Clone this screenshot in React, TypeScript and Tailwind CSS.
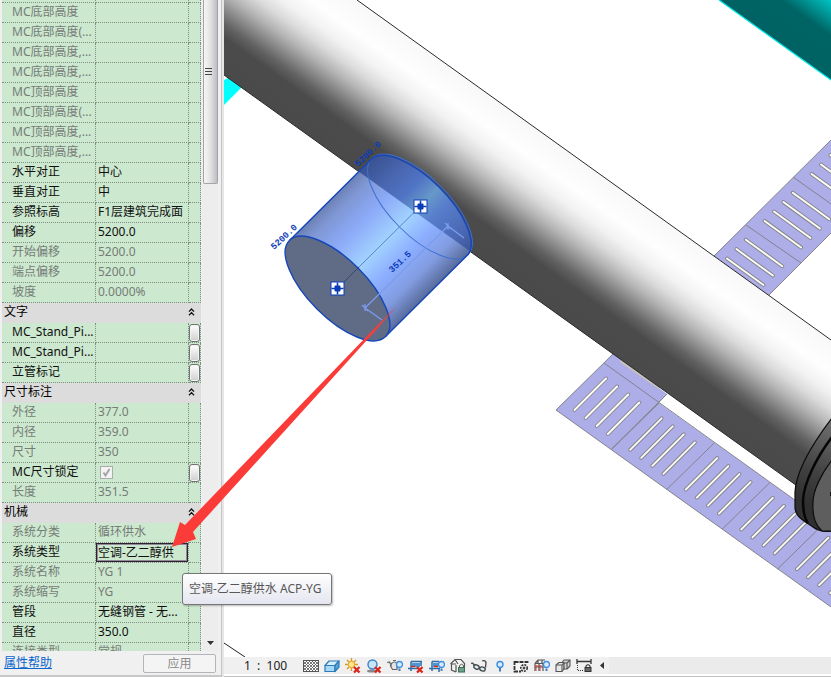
import React from "react";

type Row = {
  name: string;
  value?: string;
  active?: boolean;
  more?: boolean;
  kind?: "header" | "check" | "select";
};

const rows: Row[] = [
  { name: "MC底部高度" },
  { name: "MC底部高度(..." },
  { name: "MC底部高度,..." },
  { name: "MC底部高度,..." },
  { name: "MC顶部高度" },
  { name: "MC顶部高度(..." },
  { name: "MC顶部高度,..." },
  { name: "MC顶部高度,..." },
  { name: "水平对正", value: "中心", active: true },
  { name: "垂直对正", value: "中", active: true },
  { name: "参照标高", value: "F1层建筑完成面", active: true },
  { name: "偏移", value: "5200.0", active: true },
  { name: "开始偏移", value: "5200.0" },
  { name: "端点偏移", value: "5200.0" },
  { name: "坡度", value: "0.0000%" },
  { name: "文字", kind: "header" },
  { name: "MC_Stand_Pi...", active: true, more: true },
  { name: "MC_Stand_Pi...", active: true, more: true },
  { name: "立管标记", active: true, more: true },
  { name: "尺寸标注", kind: "header" },
  { name: "外径", value: "377.0" },
  { name: "内径", value: "359.0" },
  { name: "尺寸", value: "350" },
  { name: "MC尺寸锁定", active: true, more: true, kind: "check" },
  { name: "长度", value: "351.5" },
  { name: "机械", kind: "header" },
  { name: "系统分类", value: "循环供水" },
  { name: "系统类型", value: "空调-乙二醇供", active: true, kind: "select" },
  { name: "系统名称", value: "YG 1" },
  { name: "系统缩写", value: "YG" },
  { name: "管段", value: "无缝钢管 - 无...", active: true },
  { name: "直径", value: "350.0", active: true },
  { name: "连接类型", value: "常规" },
];

const cell = "h-5 border-b border-dotted border-[#7f8f82] p-0 text-left font-normal";

function HeaderRow({ name }: { name: string }) {
  return (
    <tr>
      <th colSpan={3} className="h-5 bg-[#dcdcdc] p-0 font-normal">
        <button className="flex h-5 w-full items-center justify-between pr-[6px] pb-[2px] pl-[2px] text-black">
          <span>{name}</span>
          <svg width="7" height="8" viewBox="0 0 7 8" fill="none" stroke="#111" strokeWidth="1.3" aria-hidden="true">
            <path d="M1 3.6 3.5 1 6 3.6M1 7.2 3.5 4.6 6 7.2" />
          </svg>
        </button>
      </th>
    </tr>
  );
}

function PropertyRow({ row }: { row: Row }) {
  const tone = row.active ? "text-[#101010]" : "text-[#767c77]";
  return (
    <tr className={tone}>
      <th scope="row" className={`${cell} border-r pl-[10px] whitespace-nowrap`}>
        <div className="h-[19px] leading-[17px]">{row.name}</div>
      </th>
      <td className={`${cell} border-r whitespace-nowrap`}>
        {row.kind === "select" ? (
          <input
            aria-label={row.name}
            defaultValue={row.value}
            className="block h-[19px] w-full border border-[#2f2032] bg-[#cce8cf] pb-[2px] pl-px shadow-[inset_0_0_0_1px_#8f8a95] outline-none"
          />
        ) : row.kind === "check" ? (
          <div className="relative ml-1 h-[13px] w-[13px]">
            <input
              type="checkbox"
              aria-label={row.name}
              defaultChecked
              disabled
              className="block h-[13px] w-[13px] appearance-none border border-[#a9adab] bg-[#f3f3f3]"
            />
            <svg className="pointer-events-none absolute inset-0" width="13" height="13" viewBox="0 0 13 13" fill="none" stroke="#a2a2a6" strokeWidth="1.8" aria-hidden="true">
              <path d="M3.5 6.5 5.5 9.5 9.5 3" />
            </svg>
          </div>
        ) : (
          <div className="h-[19px] pl-[2px] leading-[17px]">{row.value}</div>
        )}
      </td>
      <td className={`${cell} border-r`}>
        {row.more && (
          <button
            aria-label={`${row.name} …`}
            className="block h-[18px] w-[11px] rounded-[3px] border border-[#6f7471] bg-linear-to-b from-white to-[#cfcfcf] shadow-[inset_0_0_0_1px_#f4f4f4]"
          />
        )}
      </td>
    </tr>
  );
}

function Properties() {
  return (
    <aside className="flex w-[221px] shrink-0 flex-col bg-[#f0f0f0]">
      <div className="flex min-h-0 flex-1 overflow-hidden pl-[2px]">
        <div className="w-[199px] shrink-0 overflow-hidden">
          <table className="w-full table-fixed border-separate border-spacing-0 bg-[#cce8cf]">
            <colgroup>
              <col className="w-[94px]" />
              <col className="w-[93px]" />
              <col className="w-[12px]" />
            </colgroup>
            <tbody>
              <tr>
                <td className="h-[3px] border-r border-b border-dotted border-[#7f8f82] p-0" />
                <td className="h-[3px] border-r border-b border-dotted border-[#7f8f82] p-0" />
                <td className="h-[3px] border-r border-b border-dotted border-[#7f8f82] p-0" />
              </tr>
              {rows.map((row, i) =>
                row.kind === "header" ? <HeaderRow key={i} name={row.name} /> : <PropertyRow key={i} row={row} />,
              )}
            </tbody>
          </table>
        </div>
        <div className="ml-[1px] flex w-4 flex-col items-center justify-between bg-[#ededed]">
          <div className="flex h-[184px] w-[15px] flex-col items-center rounded-b-[2px] border border-t-0 border-[#a3a3a8] bg-linear-to-r from-[#f6f6f6] via-[#e2e2e4] to-[#bcbcc2] pt-[68px] pr-[3px]">
            <div className="flex w-[7px] flex-col gap-[2px]">
              <span className="h-px bg-[#444]" />
              <span className="h-px bg-[#444]" />
              <span className="h-px bg-[#444]" />
            </div>
          </div>
          <button aria-label="向下滚动" className="flex h-[17px] w-[15px] items-center justify-center">
            <svg width="7" height="4" viewBox="0 0 7 4" aria-hidden="true">
              <path d="M0 0h7L3.500 4z" fill="#333" />
            </svg>
          </button>
        </div>
      </div>
      <footer className="flex h-6 shrink-0 items-center justify-between pr-[5px] pl-1">
        <a href="#help" className="text-[#0a66cc] underline">
          属性帮助
        </a>
        <button disabled className="h-[19px] w-[73px] rounded-[2px] border border-[#b2b6ba] bg-[#f4f4f4] leading-[17px] text-[#8a8a8a]">
          应用
        </button>
      </footer>
      <div className="h-[2px] shrink-0 bg-[#c8c8c8]" />
    </aside>
  );
}

const lowerCells = [0, 1, 2, 3, 4];
const fourSlots = [0, 1, 2, 3];
const upperSlots = [0, 1, 2, 4, 5, 6, 7, 9, 10, 11];

function Slot({ x, y, dx, dy }: { x: number; y: number; dx: number; dy: number }) {
  return (
    <g strokeLinecap="round">
      <path d={`M${x} ${y}l${dx} ${dy}`} stroke="#85858f" strokeWidth="3.8" />
      <path d={`M${x} ${y}l${dx} ${dy}`} stroke="#fdfdf6" strokeWidth="1.9" />
    </g>
  );
}

function Handle({ x, y }: { x: number; y: number }) {
  return (
    <g transform={`translate(${x} ${y})`}>
      <rect x="-6.500" y="-6.500" width="13" height="13" fill="#fff" stroke="#0b3cb8" />
      <path d="M0-6V6M-6 0H6" stroke="#0b3cb8" strokeWidth="1.6" />
      <rect x="-3" y="-3" width="6" height="6" rx="1" fill="#0b3cb8" />
    </g>
  );
}

function Scene() {
  const label = "fill-[#0b3cb8] font-['Liberation_Mono',monospace] text-[9px] font-bold";
  return (
    <svg className="block h-full w-full" viewBox="224 0 607 657" preserveAspectRatio="xMinYMin slice" fill="none" role="img" aria-label="三维视图">
      <defs>
        <linearGradient id="pipe" gradientUnits="userSpaceOnUse" x1="224" y1="75" x2="304.700" y2="-37.800">
          <stop offset="0" stopColor="#4a4a4a" />
          <stop offset=".22" stopColor="#4b4b4b" />
          <stop offset=".3" stopColor="#626262" />
          <stop offset=".38" stopColor="#868686" />
          <stop offset=".48" stopColor="#b4b4b4" />
          <stop offset=".58" stopColor="#dadada" />
          <stop offset=".68" stopColor="#f2f2f2" />
          <stop offset=".8" stopColor="#fefefe" />
          <stop offset="1" stopColor="#f8f8f8" />
        </linearGradient>
        <linearGradient id="teal" gradientUnits="userSpaceOnUse" x1="775" y1="40" x2="813" y2="-13">
          <stop offset="0" stopColor="#006262" />
          <stop offset=".55" stopColor="#006464" />
          <stop offset="1" stopColor="#00c4c4" />
        </linearGradient>
        <linearGradient id="body" gradientUnits="userSpaceOnUse" x1="289.500" y1="240.500" x2="385.500" y2="336.500">
          <stop offset="0" stopColor="#6b80b4" />
          <stop offset=".1" stopColor="#7f97d4" />
          <stop offset=".28" stopColor="#8caaf8" />
          <stop offset=".5" stopColor="#a2d2ff" />
          <stop offset=".68" stopColor="#8caeff" />
          <stop offset=".85" stopColor="#829ce0" />
          <stop offset="1" stopColor="#586c9c" />
        </linearGradient>
        <linearGradient id="bodyDark" gradientUnits="userSpaceOnUse" x1="372" y1="158.500" x2="468" y2="254.500">
          <stop offset="0" stopColor="#3a5290" />
          <stop offset=".2" stopColor="#4966b0" />
          <stop offset=".36" stopColor="#5074c4" />
          <stop offset=".5" stopColor="#6698c8" />
          <stop offset=".62" stopColor="#587ecc" />
          <stop offset=".85" stopColor="#4a68b4" />
          <stop offset="1" stopColor="#3e5596" />
        </linearGradient>
        <linearGradient id="flange" gradientUnits="userSpaceOnUse" x1="831" y1="425" x2="800" y2="500">
          <stop offset="0" stopColor="#6c6c6c" />
          <stop offset=".6" stopColor="#414141" />
          <stop offset="1" stopColor="#303030" />
        </linearGradient>
        <clipPath id="abovePipeEdge">
          <path d="M224 75 831 510V0H224z" />
        </clipPath>
      </defs>

      <rect x="224" width="607" height="657" fill="#fff" />
      <path d="M719 0 831 80V0z" fill="url(#teal)" />
      <path d="M719 0 831 80" stroke="#00e8e8" strokeWidth="1.200" />
      <path d="M224 80 230 77 242 87 224 105z" fill="#00ffff" />

      <path d="M714 256 831 140V233L768 296z" fill="#adade8" />
      <path d="M714 256 831 140M768 296 831 233M746 225 801 263M793 177 831 204" stroke="#83838d" />
      {upperSlots.map((n) => (
        <Slot key={n} x={727 + n * 9.4} y={258.5 - n * 9.4} dx={36.5} dy={26.5} />
      ))}

      <path d="M556 410 613 354 667 394 659 403 831 526V607z" fill="#adade8" />
      <path d="M556 410 613 354M604 363 831 526M667 394 611.500 449M556 410 831 607" stroke="#83838d" />
      <path d="M620 361 659 388" stroke="#c9c4b6" strokeWidth="2" />
      {lowerCells.map((c) => (
        <g key={c}>
          <path d={`M${659 + c * 55.4} ${403 + c * 39.8}l-47.500 46.500`} stroke="#83838d" />
          {fourSlots.map((s) => (
            <Slot key={s} x={574.5 + c * 55.6 + s * 11.1} y={410 + c * 39.8 + s * 8} dx={31.5} dy={-31.5} />
          ))}
        </g>
      ))}

      <path d="M224 0V75L800 488 831 440V340L357 0z" fill="url(#pipe)" />
      <path d="M224 75 800 488M357 0 831 340" stroke="#2a2a2a" />

      <path d="M832 418C813 443 796 472 795 492V508C796 518 805 521 813 527 818 531 824 532 832 531z" fill="url(#flange)" stroke="#0c0c0c" strokeWidth="1.200" />
      <path d="M832 437C816 458 804 483 803 500 803 511 804 518 808 523" stroke="#060606" strokeWidth="2.500" />
      <path d="M832 460C822 473 813 490 813 502 812 516 815 525 822 531H832z" fill="#5e5e5e" stroke="#0c0c0c" strokeWidth="1.200" />
      <path d="M831 492v4" stroke="#111" strokeWidth="2" />

      <path d="M289.500 240.500 372 158.500A68 29 45 0 1 468 254.500L385.500 336.500A68 29 45 0 1 289.500 240.500z" fill="url(#body)" />
      <path d="M289.500 240.500 372 158.500A68 29 45 0 1 468 254.500L385.500 336.500z" fill="url(#bodyDark)" clipPath="url(#abovePipeEdge)" />
      <ellipse cx="420" cy="206.500" rx="68" ry="29" transform="rotate(45 420 206.500)" stroke="#3f6fd0" />
      <path d="M289.500 240.500 372 158.500A68 29 45 0 1 468 254.500L385.500 336.500" stroke="#1646b8" strokeWidth="1.400" />
      <ellipse cx="337.500" cy="288.500" rx="68" ry="29" transform="rotate(45 337.500 288.500)" fill="#606c86" stroke="#1646b8" strokeWidth="1.400" />
      <path d="M337.500 288.500 359 267" stroke="#34486e" />
      <path d="M359 267 420 206.500" stroke="#5585c4" />
      <path d="M365 308 448 226M365 308 382 320M448 226 464 238M362 305 368 311M445 223 451 229M365 304V311M448 223V230" stroke="#7c9cf0" strokeWidth="1.200" />
      <Handle x={337.5} y={288.5} />
      <Handle x={420.5} y={206.5} />
      <text transform="translate(274 250) rotate(-43)" className={label}>5200.0</text>
      <text transform="translate(358 167) rotate(-43)" className={label}>5200.0</text>
      <text transform="translate(392 273) rotate(-43)" className={label}>351.5</text>

      <path d="M224 643 245 657" stroke="#222" />
    </svg>
  );
}

const cross = <path d="M9 9l5.500 5.500M14.500 9 9 14.500" stroke="#d8261c" strokeWidth="2.300" />;
const bulb = (
  <g>
    <circle cx="12.500" cy="6.500" r="3" fill="#d8ecff" stroke="#3b8ee0" strokeWidth="1.300" />
    <path d="M11.500 10.500h2v2.500h-2z" fill="#4a7fb8" />
  </g>
);

const tools: { label: string; art: React.ReactNode }[] = [
  {
    label: "详细程度",
    art: (
      <g>
        <rect x=".5" y="2.500" width="15" height="11" fill="#fff" stroke="#555" />
        <path d="M1 6 4 3M1 9l6-6M1 12l9-9M3 13 13 3M6 13l9-9M9 13l6-6M12 13l3-3M1 10l3 3M1 7l6 6M1 4l9 9M3 3l10 10M6 3l9 9M9 3l6 6M12 3l3 3" stroke="#555" strokeWidth=".8" />
      </g>
    ),
  },
  {
    label: "视觉样式",
    art: (
      <g stroke="#2c7ab8" strokeWidth="1.200" strokeLinejoin="round">
        <path d="M1 7.500 5 3H15L11 7.500z" fill="#d8efff" />
        <path d="M1 7.500H11V13.500H1z" fill="#a8d8f8" />
        <path d="M11 7.500 15 3V9L11 13.500z" fill="#5aa4dc" />
      </g>
    ),
  },
  {
    label: "日光路径",
    art: (
      <g>
        <path d="M6.500 0V3M6.500 10v3M0 6.500H3M2 2l2 2M11 2 9 4M2 11l2-2M10 6.500h3" stroke="#e09a1a" strokeWidth="1.400" />
        <circle cx="6.500" cy="6.500" r="3.200" fill="#ffe98a" stroke="#e09a1a" />
        {cross}
      </g>
    ),
  },
  {
    label: "阴影",
    art: (
      <g>
        <ellipse cx="6" cy="13" rx="5" ry="1.500" fill="#888" />
        <circle cx="6.500" cy="6.500" r="4.500" fill="#c8e4fa" stroke="#3a82c2" strokeWidth="1.400" />
        {cross}
      </g>
    ),
  },
  {
    label: "渲染",
    art: (
      <g>
        <path d="M0 4.500 2.500 4 4.500 8M4.500 5.500Q7.500 2.500 10 5.500V11.500H5.500L3.500 8z" fill="#e4e4e4" stroke="#666" strokeWidth="1.200" />
        <path d="M6 2.500H9" stroke="#666" />
        {bulb}
      </g>
    ),
  },
  {
    label: "裁剪视图",
    art: (
      <g>
        <path d="M3 3.500H14M3 3.500V13M0 10.500H10M13 3.500V8" stroke="#2c6ea8" strokeWidth="1.500" />
        <path d="M4 5H12V9H4z" fill="#4b97d4" />
        <path d="M3 8.500h4" stroke="#d8261c" strokeWidth="1.500" />
        {cross}
      </g>
    ),
  },
  {
    label: "显示裁剪区域",
    art: (
      <g>
        <path d="M3 3.500H10M3 3.500V13M0 10.500H11M10 11v3" stroke="#2c6ea8" strokeWidth="1.500" />
        <path d="M4 5H9V9H4z" fill="#4b97d4" />
        <path d="M5 8.500h4" stroke="#d8261c" strokeWidth="1.500" />
        {bulb}
      </g>
    ),
  },
  {
    label: "锁定三维视图",
    art: (
      <g stroke="#555">
        <path d="M.5 6 5 1.500 11 1.500 14.500 5.500V9M1.500 6V12L6 14M5 1.500 8 6M6 14V7M1 6H6" fill="#f4f4f4" strokeWidth="1.200" />
        <path d="M9.500 9V7.500Q11.500 5 13.500 7.500V9" />
        <rect x="8.500" y="9.500" width="6" height="4.500" fill="#6fa08c" stroke="#3f6a58" />
      </g>
    ),
  },
  {
    label: "临时隐藏/隔离",
    art: (
      <g stroke="#444" strokeWidth="1.300">
        <path d="M0 5.500Q2 4 3.500 8M8 10 9.500 9.500M11 3q3.500-1 4 1.500l-.5 5" />
        <ellipse cx="5.500" cy="9" rx="2.800" ry="2" transform="rotate(25 5.500 9)" fill="#d6ecf8" />
        <ellipse cx="11.500" cy="11" rx="2.800" ry="2" transform="rotate(15 11.500 11)" fill="#d6ecf8" />
      </g>
    ),
  },
  {
    label: "显示隐藏的图元",
    art: (
      <g>
        <circle cx="8" cy="6.500" r="3" fill="#d8ecff" stroke="#3b8ee0" strokeWidth="1.400" />
        <path d="M7 10h2v3.500H7z" fill="#4a7fb8" />
      </g>
    ),
  },
  {
    label: "临时视图属性",
    art: (
      <g stroke="#333">
        <path d="M2 4H14V13H2z" fill="#f6f6f6" stroke="none" />
        <path d="M1.500 3V13.500H8M1.500 4H14.500V6" strokeWidth="1.800" strokeDasharray="4 1" />
        <circle cx="11" cy="10" r="3.200" strokeDasharray="2 1" strokeWidth="1.600" />
        <circle cx="11" cy="10" r="1" fill="#444" />
      </g>
    ),
  },
  {
    label: "显示分析模型",
    art: (
      <g>
        <path d="M1 5.500 4 2H11M1 5.500H9M1 5.500V13M5 5.500V13M9 5.500V13M1 9H9M4 2V5M8 2V5" stroke="#555" strokeWidth="1.200" />
        <path d="M2 7v6M6 7v6M1 8H8" stroke="#c84438" />
        {bulb}
      </g>
    ),
  },
  {
    label: "高亮显示位移集",
    art: (
      <g stroke="#555" strokeWidth="1.100" strokeLinejoin="round">
        <path d="M1 7 4 4.500H9V11L7 13.500H1z" fill="#e8e8e8" />
        <path d="M1 7H7V13.500M7 7 9 4.500" />
        <path d="M7 4.500 9 2H15V8L12 11H9V4.500z" fill="#d4d4d4" />
        <path d="M12 5V11M9 5H12L15 2" />
      </g>
    ),
  },
  {
    label: "显示约束",
    art: (
      <g stroke="#333">
        <path d="M1 1V6M15 1V6M1 3.500H15" strokeWidth="1.300" />
        <path d="M1.500 7V12.500H8" strokeDasharray="1 1" />
        <path d="M10 9V8Q12 5.500 14 8V9" strokeWidth="1.200" />
        <rect x="9" y="9.500" width="6" height="4" fill="#666" />
      </g>
    ),
  },
];

function ViewBar() {
  return (
    <nav aria-label="视图控制栏" className="flex h-[17px] shrink-0 items-center bg-[#f0f0f0]">
      <button className="w-[76px] pl-5 text-left leading-[16px] whitespace-pre text-[#222]">{"1  :  100"}</button>
      {tools.map((tool) => (
        <button key={tool.label} aria-label={tool.label} className="flex h-[17px] w-[21px] shrink-0 items-center justify-center">
          <svg width="16" height="16" viewBox="0 0 16 16" fill="none" aria-hidden="true">
            {tool.art}
          </svg>
        </button>
      ))}
      <div className="flex h-full flex-1 items-center bg-[#ebebeb]">
        <button aria-label="向左滚动" className="flex h-full w-[15px] items-center justify-center bg-[#f0f0f0]">
          <svg width="4" height="7" viewBox="0 0 4 7" aria-hidden="true">
            <path d="M4 0V7L0 3.500z" fill="#333" />
          </svg>
        </button>
      </div>
    </nav>
  );
}

export default function App() {
  return (
    <div className="relative flex h-screen overflow-hidden bg-white font-['Noto_Sans','Noto_Sans_CJK_SC',sans-serif] text-xs">
      <Properties />
      <div className="w-[3px] shrink-0 border-l border-[#c4c4c4] bg-[#e6e6e6]" />
      <main className="flex min-w-0 flex-1 flex-col">
        <div className="min-h-0 flex-1">
          <Scene />
        </div>
        <ViewBar />
        <div className="h-[3px] shrink-0 border-b border-[#c0c0c0] bg-white" />
      </main>

      <div role="tooltip" className="absolute top-[573px] left-[182px] rounded-[3px] border border-[#767676] bg-linear-to-b from-white to-[#e4e5f0] py-[6px] pr-[10px] pl-[6px] leading-[18px] whitespace-nowrap text-[#575757] shadow-[1px_1px_2px_#0004]">
        空调-乙二醇供水 ACP-YG
      </div>
      <svg className="pointer-events-none absolute top-0 left-0 overflow-visible" width="400" height="560" viewBox="0 0 400 560" aria-hidden="true">
        <defs>
          <linearGradient id="arrow" gradientUnits="userSpaceOnUse" x1="395" y1="308" x2="375" y2="329">
            <stop offset="0" stopColor="#fb3b38" stopOpacity=".2" />
            <stop offset="1" stopColor="#fb3b38" />
          </linearGradient>
        </defs>
        <path d="M172 547 180 522 185 525 394.500 307.500 395.500 308.500 193 532 196 539z" fill="url(#arrow)" />
      </svg>
    </div>
  );
}
